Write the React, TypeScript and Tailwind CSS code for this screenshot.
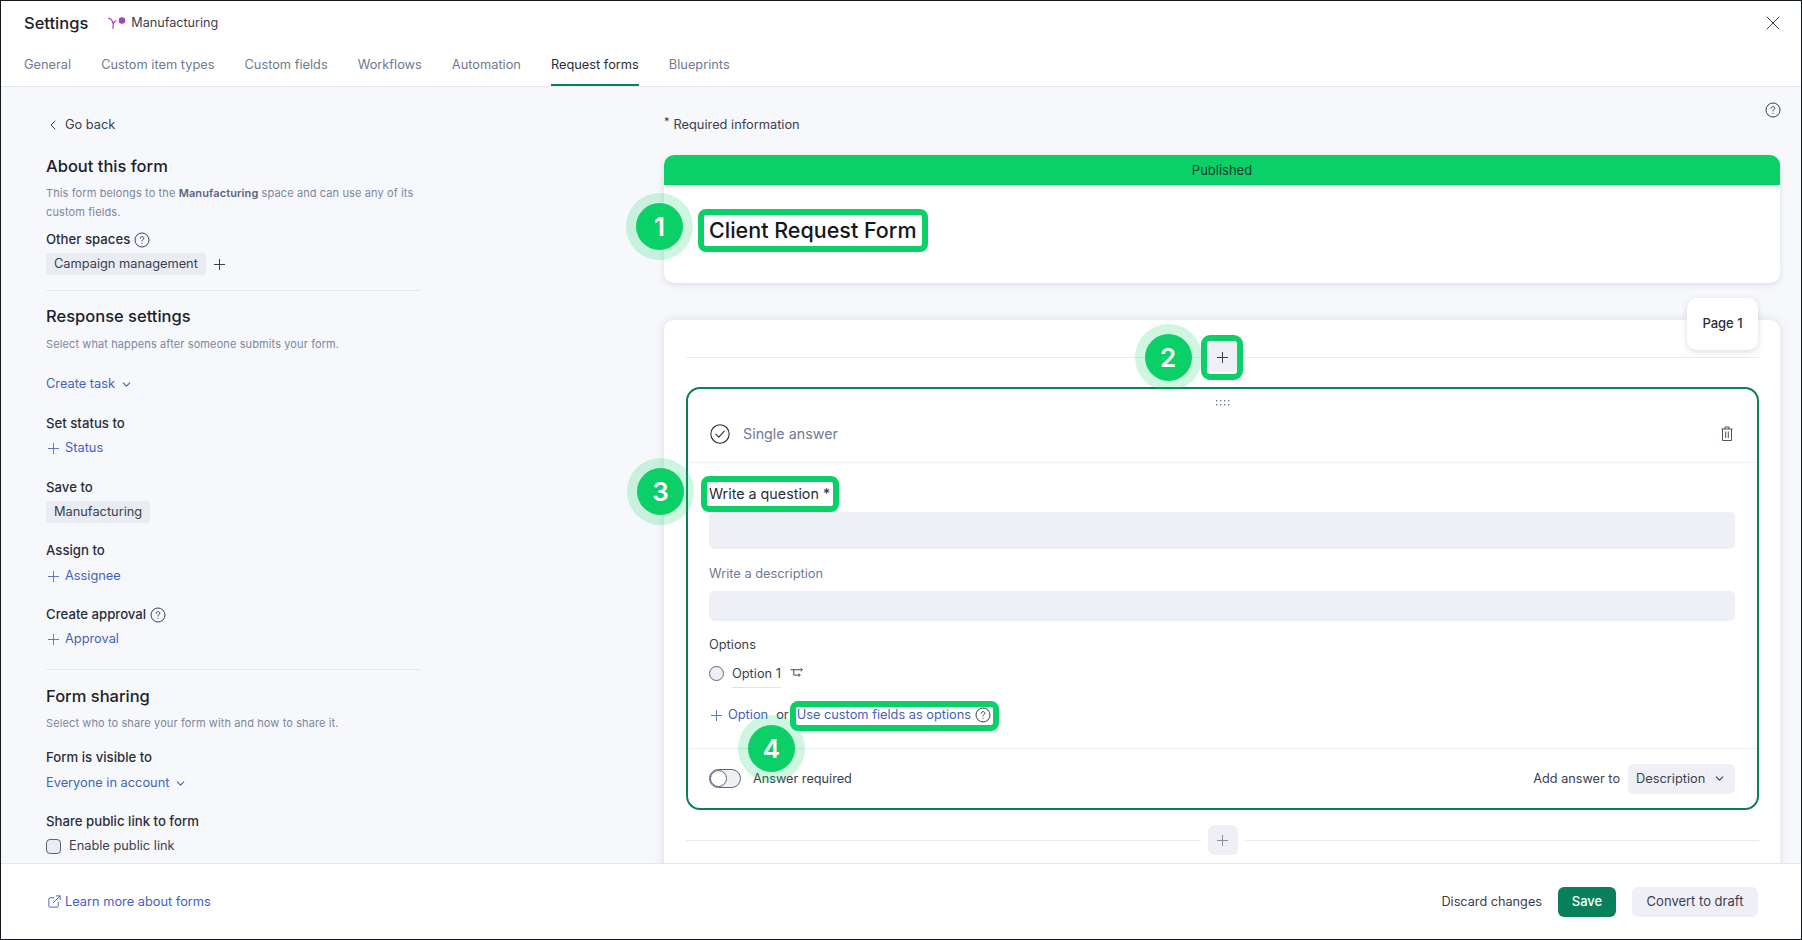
import React from "react";
import { ChevronLeft, ChevronDown, X, ExternalLink } from "lucide-react";

const Help = ({ className = "" }: { className?: string }) => (
  <svg viewBox="0 0 16 16" className={`h-[16px] w-[16px] shrink-0 ${className}`} fill="none" stroke="#3b4050" strokeWidth="1">
    <circle cx="8" cy="8" r="7" />
    <path d="M6.200 6.300c0-1 .8-1.700 1.800-1.700s1.800.7 1.800 1.600c0 1.300-1.800 1.400-1.800 2.800" strokeLinecap="round" />
    <circle cx="8" cy="11.300" r=".6" fill="#3b4050" stroke="none" />
  </svg>
);

const PlusIcon = ({ className = "" }: { className?: string }) => (
  <svg viewBox="0 0 11 11" className={`h-[11px] w-[11px] shrink-0 ${className}`} fill="none" stroke="currentColor" strokeWidth="1">
    <path d="M5.500 0v11M0 5.500h11" />
  </svg>
);

const Callout = ({ n, className }: { n: number; className: string }) => (
  <div className={`absolute z-20 flex h-[67px] w-[67px] items-center justify-center rounded-full bg-[#0bd068]/20 ${className}`}>
    <div className="flex h-[47px] w-[47px] items-center justify-center rounded-full bg-[#0bd068] text-[26px] font-semibold text-white">{n}</div>
  </div>
);

const AddLink = ({ label }: { label: string }) => (
  <div className="flex h-[20px] items-center text-[12.8px] text-[#3f63c0]">
    <PlusIcon className="mr-[6px] ml-[2px] text-[#5f7bc4]" />
    {label}
  </div>
);

const Label = ({ children }: { children: React.ReactNode }) => (
  <div className="flex h-[20px] items-center gap-[4px] text-[13.2px] font-medium text-[#2a2e3a]">{children}</div>
);

const Chip = ({ children }: { children: React.ReactNode }) => (
  <div className="flex h-[22px] w-fit items-center rounded-[4px] bg-[#e9ecf3] px-[8px] text-[12.8px] text-[#3b4050]">{children}</div>
);

const Dropdown = ({ label }: { label: string }) => (
  <div className="flex h-[20px] items-center text-[12.8px] text-[#3f63c0]">
    {label}
    <ChevronDown className="ml-[5px] h-[13px] w-[13px]" strokeWidth={2} />
  </div>
);

const Sub = ({ children }: { children: React.ReactNode }) => (
  <p className="text-[11px] leading-[19px] tracking-[0.11px] text-[#7d869e]">{children}</p>
);

const Heading = ({ children }: { children: React.ReactNode }) => (
  <h2 className="text-[16.5px] leading-[24px] font-medium text-[#1c1f2b]">{children}</h2>
);

const Insert = ({ ring }: { ring?: boolean }) => (
  <div className="flex h-[30px] items-center">
    <div className="h-px flex-1 bg-[#e7eaf1]" />
    <div className={`relative mx-[7px] flex h-[30px] w-[30px] items-center justify-center rounded-[6px] bg-[#eef0f5] ${ring ? "text-[#3b4050]" : "text-[#8a8f9e]"}`}>
      <PlusIcon />
      {ring && <div className="absolute top-[-7px] right-[-5px] bottom-[-8px] left-[-7px] rounded-[9px] border-[6px] border-[#0bd068]" />}
      {ring && <Callout n={2} className="top-[-18px] left-[-73px]" />}
    </div>
    <div className="h-px flex-1 bg-[#e7eaf1]" />
  </div>
);

const tabs = ["General", "Custom item types", "Custom fields", "Workflows", "Automation", "Request forms", "Blueprints"];

export default function App() {
  return (
    <div className="flex h-[940px] w-[1802px] flex-col overflow-hidden border border-[#15181d] bg-white font-['Inter',sans-serif] text-[#2a2e3a]">
      {/* header */}
      <header className="relative z-10 h-[86px] shrink-0 border-b border-[#e6e9f0] bg-white px-[23px]">
        <div className="flex h-[44px] items-center">
          <span className="text-[16.5px] font-medium text-[#1c1f2b]">Settings</span>
          <svg viewBox="0 0 18 12" className="mr-[5px] ml-[20px] h-[12px] w-[18px]" fill="none">
            <path d="M.5 1C2.500 1.500 4.500 3.500 5.200 7M5.200 7 5 11.500M5.200 7C5.800 5.500 6.500 4.500 8 3.800" stroke="#a83cc4" strokeWidth="1.200" strokeLinecap="round" />
            <circle cx="14" cy="3.500" r="3.200" fill="#a83cc4" />
          </svg>
          <span className="text-[12.6px] text-[#3b4050]">Manufacturing</span>
          <X className="mr-[-7px] ml-auto h-[24px] w-[24px] text-[#3b4050]" strokeWidth={1} />
        </div>
        <nav className="flex h-[41px] items-stretch gap-[30px]">
          {tabs.map((t) => (
            <div
              key={t}
              className={
                t === "Request forms"
                  ? "flex items-center border-b-2 border-[#0a7f5c] text-[12.8px] text-[#2a2e3a]"
                  : "flex items-center pb-[2px] text-[12.8px] text-[#6f7a94]"
              }
            >
              {t}
            </div>
          ))}
        </nav>
      </header>

      {/* body */}
      <div className="flex min-h-0 flex-1 overflow-hidden bg-[#f7f8fb]">
        {/* left column */}
        <aside className="w-[663px] shrink-0 pt-[28px] pl-[45px]">
          <div className="w-[375px]">
            <div className="flex h-[20px] items-center text-[12.8px] text-[#3b4050]">
              <ChevronLeft className="mr-[4.500px] ml-[-1.500px] h-[16px] w-[16px]" strokeWidth={1.5} />
              Go back
            </div>
            <div className="mt-[19px]">
              <Heading>About this form</Heading>
            </div>
            <div className="mt-[6px]">
              <Sub>
                This form belongs to the <span className="font-semibold text-[#5c6580]">Manufacturing</span> space and can use any of its custom fields.
              </Sub>
            </div>
            <div className="mt-[8px]">
              <Label>
                Other spaces <Help />
              </Label>
            </div>
            <div className="mt-[3px] flex items-center">
              <Chip>Campaign management</Chip>
              <PlusIcon className="ml-[8px] text-[#3b4050]" />
            </div>
            <div className="mt-[15px] h-px bg-[#e4e7f0]" />
            <div className="mt-[13px]">
              <Heading>Response settings</Heading>
            </div>
            <div className="mt-[7px]">
              <Sub>Select what happens after someone submits your form.</Sub>
            </div>
            <div className="mt-[20px]">
              <Dropdown label="Create task" />
            </div>
            <div className="mt-[20px]">
              <Label>Set status to</Label>
            </div>
            <div className="mt-[4px]">
              <AddLink label="Status" />
            </div>
            <div className="mt-[20px]">
              <Label>Save to</Label>
            </div>
            <div className="mt-[3px]">
              <Chip>Manufacturing</Chip>
            </div>
            <div className="mt-[18px]">
              <Label>Assign to</Label>
            </div>
            <div className="mt-[5px]">
              <AddLink label="Assignee" />
            </div>
            <div className="mt-[19px]">
              <Label>
                Create approval <Help />
              </Label>
            </div>
            <div className="mt-[4px]">
              <AddLink label="Approval" />
            </div>
            <div className="mt-[20px] h-px bg-[#e4e7f0]" />
            <div className="mt-[14px]">
              <Heading>Form sharing</Heading>
            </div>
            <div className="mt-[6px]">
              <Sub>Select who to share your form with and how to share it.</Sub>
            </div>
            <div className="mt-[15px]">
              <Label>Form is visible to</Label>
            </div>
            <div className="mt-[5px]">
              <Dropdown label="Everyone in account" />
            </div>
            <div className="mt-[19px]">
              <Label>Share public link to form</Label>
            </div>
            <div className="mt-[4px] flex h-[20px] items-center text-[12.8px] text-[#3b4050]">
              <div className="mr-[8px] h-[15px] w-[15px] rounded-[4px] border border-[#5c6580] bg-[#e9ecf3]" />
              Enable public link
            </div>
          </div>
        </aside>

        {/* right column */}
        <main className="relative w-[1116px] shrink-0 pt-[28px]">
          <div className="flex h-[20px] items-center text-[12.8px] text-[#3b4050]">
            <span className="mr-[4px] self-start text-[11px] leading-[12px]">*</span>
            Required information
          </div>
          <Help className="absolute top-[15px] right-[-1px]" />

          {/* title card */}
          <section className="mt-[20px] rounded-[10px] bg-white shadow-[0_2px_6px_rgba(70,85,130,0.16)]">
            <div className="flex h-[30px] items-center justify-center rounded-t-[10px] bg-[#0bd068] pt-[1px] text-[13px] text-[#1d3a30]">Published</div>
            <div className="flex h-[98px] items-start pt-[30px] pl-[45px]">
              <div className="relative flex h-[31px] items-center">
                <Callout n={1} className="top-[-22px] left-[-83px]" />
                <span className="text-[21.5px] font-medium text-[#14161f]">Client Request Form</span>
                <div className="absolute top-[-6px] right-[-11px] bottom-[-6px] left-[-11px] rounded-[8px] border-[6px] border-[#0bd068]" />
              </div>
            </div>
          </section>

          {/* page card */}
          <section className="relative mt-[37px] h-[600px] rounded-t-[10px] bg-white pt-[22px] pr-[21px] pl-[22px] shadow-[0_0_10px_rgba(70,85,130,0.16)]">
            <div className="absolute top-[-22px] right-[22px] z-10 flex h-[52px] w-[71px] items-center justify-center rounded-[10px] bg-white text-[13px] font-medium text-[#2a2e3a] shadow-[0_2px_6px_rgba(70,85,130,0.2)]">
              Page 1
            </div>
            <Insert ring />
            <div className="mt-[15px] h-[423px] rounded-[14px] border-2 border-[#0a7f5c]">
              <div className="flex h-[17px] items-end justify-center">
                <svg viewBox="0 0 14 6" className="h-[6px] w-[14px]" fill="#6f7a94">
                  {[0, 4, 8, 12].flatMap((x) => [0, 4].map((y) => <rect key={`${x}-${y}`} x={x} y={y} width="1.400" height="1.400" />))}
                </svg>
              </div>
              <div className="flex h-[57px] items-center border-b border-[#eef0f5] pr-[24px] pl-[22px]">
                <svg viewBox="0 0 20 20" className="h-[20px] w-[20px]" fill="none" stroke="#2a2e3a" strokeWidth="1.100">
                  <circle cx="10" cy="10" r="9.200" />
                  <path d="m5.800 10.200 3 3 5.500-6" strokeLinecap="round" strokeLinejoin="round" />
                </svg>
                <span className="ml-[13px] text-[14.3px] text-[#6f7a94]">Single answer</span>
                <svg viewBox="0 0 12 15" className="mb-[2px] ml-auto h-[15px] w-[12px]" fill="none" stroke="#3b4050" strokeWidth="0.900">
                  <path d="M.5 3h11M4 3V1h4v2M1.500 3v11.500h9V3M4.700 5.500v6.500M7.300 5.500v6.500" />
                </svg>
              </div>
              <div className="pt-[21px] pr-[22px] pl-[21px]">
                <div className="relative flex h-[20px] w-fit items-center text-[14.3px] text-[#2a2e3a]">
                  <Callout n={3} className="top-[-26px] left-[-82px]" />
                  Write a question *
                  <div className="absolute top-[-8px] right-[-9px] bottom-[-8px] left-[-8px] rounded-[8px] border-[6px] border-[#0bd068]" />
                </div>
                <div className="mt-[8px] h-[37px] rounded-[5px] bg-[#eef0f5]" />
                <div className="mt-[15px] flex h-[20px] items-center text-[12.8px] text-[#6f7a94]">Write a description</div>
                <div className="mt-[7px] h-[30px] rounded-[5px] bg-[#eef0f5]" />
                <div className="mt-[14px] flex h-[20px] items-center text-[12.8px] text-[#3b4050]">Options</div>
                <div className="mt-[7px] flex h-[26px] items-start">
                  <div className="mt-[4px] h-[15px] w-[15px] rounded-full border border-[#5c6580] bg-[#eef0f5]" />
                  <span className="ml-[8px] flex h-[26px] items-center border-b border-[#dfe3ec] pb-[1px] text-[12.8px] text-[#3b4050]">Option 1</span>
                  <svg viewBox="0 0 13 10" className="mt-[6px] ml-[9px] h-[11px] w-[14px]" fill="none" stroke="#3b4050" strokeWidth="0.900">
                    <path d="M.5 1.500H11M3.500 1.500V6.500H9.500M8 5l1.500 1.500L8 8M10 0l1.500 1.500L10 3" />
                  </svg>
                </div>
                <div className="mt-[17px] flex h-[20px] items-center text-[12.8px]">
                  <span className="text-[#3f63c0]"><AddLink label="Option" /></span>
                  <span className="ml-[8px] text-[#3b4050]">or</span>
                  <div className="relative ml-[8px] flex h-[20px] items-center text-[#3f63c0]">
                    Use custom fields as options
                    <Help className="ml-[4px]" />
                    <div className="absolute top-[-4px] right-[-8px] bottom-[-6px] left-[-7px] rounded-[8px] border-[6px] border-[#0bd068]" />
                  </div>
                </div>
              </div>
              <div className="relative mt-[23px] flex h-[60px] items-center border-t border-[#e7eaf1] pr-[22px] pl-[21px]">
                <Callout n={4} className="top-[-34px] left-[50px]" />
                <div className="flex h-[19px] w-[32px] items-center rounded-full border border-[#5c6580] bg-[#eef0f5]">
                  <div className="h-[17px] w-[17px] rounded-full border border-[#5c6580] bg-white" />
                </div>
                <span className="ml-[12px] text-[12.7px] text-[#3b4050]">Answer required</span>
                <span className="ml-auto text-[12.7px] text-[#3b4050]">Add answer to</span>
                <div className="ml-[8px] flex h-[30px] w-[107px] items-center justify-between rounded-[5px] bg-[#eef0f5] pr-[9px] pl-[8px] text-[12.8px] text-[#3b4050]">
                  Description
                  <ChevronDown className="h-[13px] w-[13px]" strokeWidth={2} />
                </div>
              </div>
            </div>
            <div className="mt-[15px]">
              <Insert />
            </div>
          </section>
        </main>
      </div>

      {/* footer */}
      <footer className="relative z-10 flex h-[76px] shrink-0 items-center border-t border-[#e4e7f0] bg-white pr-[43px] pl-[45px]">
        <ExternalLink className="mr-[3px] ml-[1px] h-[15px] w-[15px] text-[#3f63c0]" strokeWidth={1.5} />
        <span className="text-[12.8px] text-[#3f63c0]">Learn more about forms</span>
        <span className="ml-auto text-[12.7px] text-[#3b4050]">Discard changes</span>
        <div className="ml-[16px] flex h-[30px] w-[58px] items-center justify-center rounded-[6px] bg-[#0a7f5c] text-[13px] font-medium text-white">Save</div>
        <div className="ml-[16px] flex h-[30px] w-[126px] items-center justify-center rounded-[6px] bg-[#eef0f5] text-[13px] text-[#3b4050]">Convert to draft</div>
      </footer>
    </div>
  );
}
